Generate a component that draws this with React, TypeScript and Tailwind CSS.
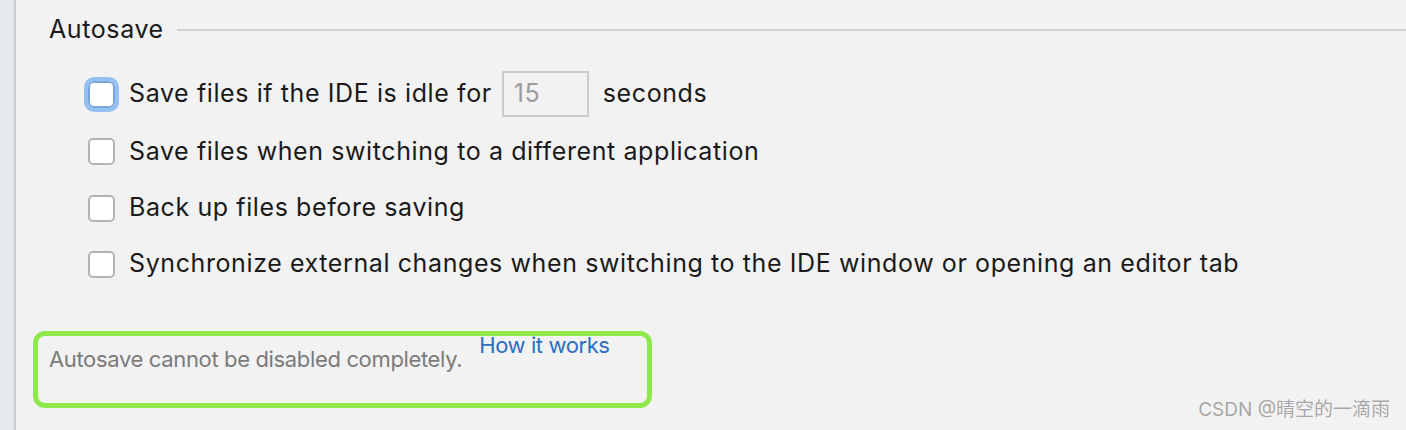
import { useState } from 'react';

interface OptionRowProps {
  label: string;
  focused?: boolean;
  heightClass: string;
  children?: React.ReactNode;
}

function Checkbox({ focused }: { focused?: boolean }) {
  if (focused) {
    return (
      <div className="h-[27px] w-[27px] shrink-0 rounded-[6px] border-2 border-[#7ca6d8] bg-white outline-[4px] outline-solid outline-[#94c1f1]" />
    );
  }
  return <div className="h-[27px] w-[27px] shrink-0 rounded-[5px] border-2 border-[#b4b4b4] bg-white" />;
}

function OptionRow({ label, focused, heightClass, children }: OptionRowProps) {
  return (
    <div className={`flex items-center ${heightClass} ml-[72px]`}>
      <Checkbox focused={focused} />
      <span className="ml-[14px] text-[25px] tracking-[0.6px] text-[#1a1a1a] whitespace-nowrap">{label}</span>
      {children}
    </div>
  );
}

export default function App() {
  const [seconds] = useState('15');

  return (
    <div
      className="flex h-[430px] w-[1406px] overflow-hidden bg-[#f2f2f2]"
      style={{ fontFamily: 'Inter, "Noto Sans", sans-serif' }}
    >
      <div className="w-[14px] shrink-0 bg-[#e4e9ee]" />
      <div className="w-[2px] shrink-0 bg-[#cbcbcb]" />

      <div className="relative flex flex-1 flex-col">
        {/* section header */}
        <div className="flex h-[58px] items-center pl-[33px] pt-[2px]">
          <span className="text-[25px] tracking-[0.6px] text-[#1a1a1a]">Autosave</span>
          <div className="ml-[13px] h-[2px] flex-1 bg-[#d0d0d0]" />
        </div>

        <div className="mt-[7px]">
          <OptionRow label="Save files if the IDE is idle for" focused heightClass="h-[58px]">
            <div className="ml-[10px] flex h-[46px] w-[87px] items-center border-2 border-[#cccccc] pl-[10px] text-[25px] tracking-[0.6px] text-[#9c9c9c]">
              {seconds}
            </div>
            <span className="ml-[14px] text-[25px] tracking-[0.6px] text-[#1a1a1a]">seconds</span>
          </OptionRow>
          <OptionRow label="Save files when switching to a different application" heightClass="h-[57px]" />
          <OptionRow label="Back up files before saving" heightClass="h-[56px]" />
          <OptionRow
            label="Synchronize external changes when switching to the IDE window or opening an editor tab"
            heightClass="h-[56px]"
          />
        </div>

        {/* note */}
        <div className="ml-[17px] mt-[39px] flex h-[77px] w-[619px] items-start rounded-[12px] border-[5px] border-[#8ce84b] pl-[11px]">
          <span className="mt-[7px] text-[22px] tracking-[-0.35px] text-[#7b7b7b] whitespace-nowrap">
            Autosave cannot be disabled completely.
          </span>
          <a className="ml-[17px] -mt-[7px] text-[22px] tracking-[-0.4px] text-[#2b6fc0] whitespace-nowrap">How it works</a>
        </div>

        <div
          className="absolute bottom-[6px] right-[16px] text-[19px] text-[#a6a6a6] [text-shadow:0_0_1px_#ffffff]"
          style={{ fontFamily: 'Inter, "Noto Sans CJK SC", sans-serif' }}
        >
          CSDN @晴空的一滴雨
        </div>
      </div>
    </div>
  );
}
